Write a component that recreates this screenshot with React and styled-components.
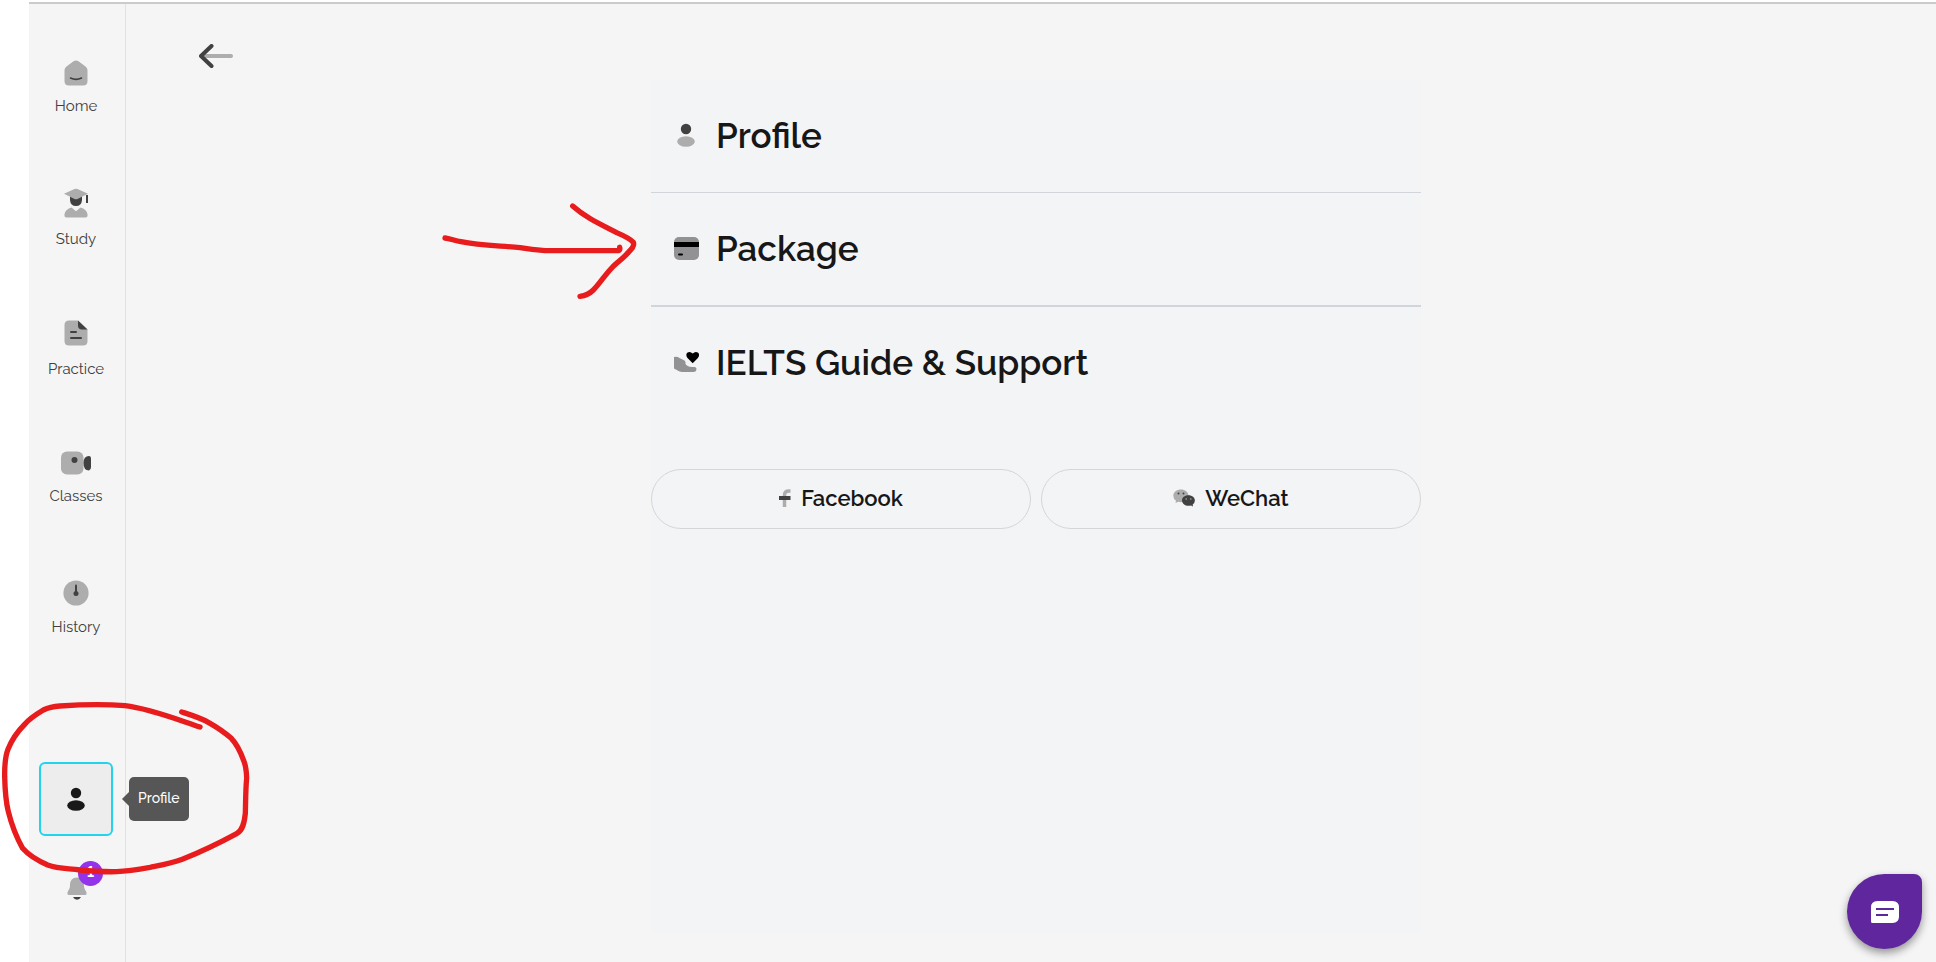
import React from "react";
import styled, { createGlobalStyle } from "styled-components";

const navItems = [
  { label: "Home", icon: <HomeIcon />, gap: 7 },
  { label: "Study", icon: <StudyIcon />, gap: 10 },
  { label: "Practice", icon: <PracticeIcon />, gap: 10 },
  { label: "Classes", icon: <ClassesIcon />, gap: 7 },
  { label: "History", icon: <HistoryIcon />, gap: 8 },
];

const menuItems = [
  { label: "Profile", icon: <PersonIcon head="#414141" body="#adadad" />, line: 1 },
  { label: "Package", icon: <CardIcon />, line: 2 },
  { label: "IELTS Guide & Support", icon: <SupportIcon />, line: 0 },
];

const App = () => {
  return (
    <Page>
      <GlobalStyle />
      <Shell>
        <Sidebar>
          <NavList>
            {navItems.map((item) => (
              <NavLink href="#" key={item.label} $gap={item.gap}>
                <NavIcon>{item.icon}</NavIcon>
                {item.label}
              </NavLink>
            ))}
          </NavList>
          <SidebarBottom>
            <ProfileButton aria-label="Open profile">
              <PersonIcon head="#191919" body="#191919" />
              <Tooltip>Profile</Tooltip>
            </ProfileButton>
            <BellButton aria-label="Notifications">
              <BellIcon />
              <Badge>1</Badge>
            </BellButton>
          </SidebarBottom>
        </Sidebar>
        <Main>
          <BackButton aria-label="Back">
            <BackIcon />
          </BackButton>
          <Panel>
            {menuItems.map((item) => (
              <MenuRow href="#" key={item.label} $line={item.line}>
                <MenuIcon>{item.icon}</MenuIcon>
                {item.label}
              </MenuRow>
            ))}
            <SocialRow>
              <SocialButton>
                <FacebookIcon />
                Facebook
              </SocialButton>
              <SocialButton>
                <WeChatIcon />
                WeChat
              </SocialButton>
            </SocialRow>
          </Panel>
        </Main>
      </Shell>
      <ChatButton aria-label="Chat">
        <ChatIcon />
      </ChatButton>
      <CircleMark viewBox="0 0 780 816">
        <path d="M600 111C530 88 450 56 375 47C310 42 240 44 180 48Q150 50 130 60C100 78 85 90 75 102C50 127 35 150 24 178C13 206 14 230 14 260C15 300 16 330 25 365C35 405 48 440 68 475C90 500 115 513 143 525C175 537 205 535 240 540C280 544 310 546 350 545C385 543 415 538 450 532C485 525 515 520 547 508C610 483 660 458 710 431C728 421 733 400 736 370C737 330 737 295 740 265C739 240 739 230 731 212C722 186 710 162 694 145C675 128 650 111 625 97C600 83 570 74 545 66" />
      </CircleMark>
      <ArrowMark viewBox="0 0 660 750">
        <path d="M45 234C60 236 75 242 93 245C150 257 210 257 270 263Q305 269 345 272L565 272Q571 270 569 262" />
        <path d="M428 138C470 175 510 192 560 218C588 230 600 236 610 247Q615 258 596 276C580 296 560 307 547 322C525 344 510 370 490 390Q474 406 450 409" />
      </ArrowMark>
    </Page>
  );
};
export default App;

function HomeIcon() {
  return (
    <svg width="24" height="26" viewBox="0 0 24 26">
      <path d="M9.5 1.3Q12 -.4 14.5 1.3L21.5 6.4Q23.5 8 23.5 10V21Q23.5 25.5 19 25.5H5Q.5 25.5.5 21V10Q.5 8 2.5 6.4Z" fill="#adadad" />
      <path d="M6.5 18Q12 20.8 17.5 18" fill="none" stroke="#414141" strokeWidth="1.6" strokeLinecap="round" />
    </svg>
  );
}

function StudyIcon() {
  return (
    <svg width="26" height="30" viewBox="0 0 26 30">
      <path d="M7 8V12Q7.500 18 13 18Q18.500 18 19 12V8Z" fill="#414141" />
      <path d="M1 5.800L11.500 .900Q13 .400 14.500 .900L25 5.800L14.500 11Q13 11.600 11.500 11Z" fill="#adadad" />
      <path d="M24 7V15" stroke="#414141" strokeWidth="2" />
      <path d="M8.500 19.500L13 23.200L17.500 19.500Q23.500 21 24.500 26Q25 29.500 22.500 29.500H3.500Q1 29.500 1.500 26Q2.500 21 8.500 19.500Z" fill="#adadad" />
    </svg>
  );
}

function PracticeIcon() {
  return (
    <svg width="24" height="26" viewBox="0 0 24 26">
      <path d="M5 .5H14L23.500 9.500V21Q23.500 25.500 19 25.500H5Q.5 25.500.5 21V5Q.5.500 5 .5Z" fill="#adadad" />
      <path d="M14 .500L23.500 9.500H18Q14 9.500 14 5.500Z" fill="#414141" />
      <path d="M7 12H12M7 18H17" stroke="#414141" strokeWidth="2" strokeLinecap="round" />
    </svg>
  );
}

function ClassesIcon() {
  return (
    <svg width="30" height="24" viewBox="0 0 30 24">
      <rect x="0" y=".5" width="22.500" height="23" rx="6" fill="#adadad" />
      <circle cx="13.500" cy="9" r="3" fill="#414141" />
      <path d="M28 5Q30 5 30 8V16Q30 19 28 19.500Q22.500 19.500 22.500 12Q22.500 5 28 5Z" fill="#414141" />
    </svg>
  );
}

function HistoryIcon() {
  return (
    <svg width="26" height="26" viewBox="0 0 26 26">
      <circle cx="13" cy="13" r="12.600" fill="#adadad" />
      <path d="M13 5.500V13" stroke="#414141" strokeWidth="2" strokeLinecap="round" />
      <circle cx="13" cy="13.500" r="2.500" fill="#414141" />
    </svg>
  );
}

function PersonIcon({ head, body }) {
  return (
    <svg width="18" height="24" viewBox="0 0 18 24">
      <circle cx="9" cy="6" r="5.200" fill={head} />
      <ellipse cx="9" cy="18.500" rx="8.800" ry="5.200" fill={body} />
    </svg>
  );
}

function BellIcon() {
  return (
    <svg width="22" height="24" viewBox="-2 0 22 24">
      <path d="M10 .5C5.500.5 3 3.500 3 8C3 12 1.500 13 .5 15.500Q0 18 2 18H18Q20 18 19.500 15.500C18.500 13 17 12 17 8C17 3.500 14.500.5 10 .5Z" fill="#adadad" />
      <path d="M6 20H14Q12.500 22.800 10 22.800Q7.500 22.800 6 20Z" fill="#414141" />
    </svg>
  );
}

function BackIcon() {
  return (
    <svg width="34" height="24" viewBox="0 0 34 24">
      <path d="M4 12H32" stroke="#adadad" strokeWidth="4" strokeLinecap="round" />
      <path d="M12.500 2L2 12L12.500 22" fill="none" stroke="#414141" strokeWidth="4" strokeLinecap="round" strokeLinejoin="round" />
    </svg>
  );
}

function CardIcon() {
  return (
    <svg width="25" height="23" viewBox="0 0 25 23">
      <rect width="25" height="23" rx="5" fill="#929294" />
      <path d="M0 5H25V10H0Z" />
      <path d="M5 17.500H8" stroke="#000" strokeWidth="2" strokeLinecap="round" />
    </svg>
  );
}

function SupportIcon() {
  return (
    <svg width="25" height="22" viewBox="0 0 25 22">
      <path d="M0 6Q3 5 5.500 7L10.500 9.500Q12 10.500 11.500 13Q13.500 16 18 16H21Q22.800 16.500 22.500 18.500Q22 21 19.500 21H8Q6 21 0 17.500Z" fill="#929294" />
      <path d="M18.700 12.300L13.500 7Q11.300 4 13.200 1.800Q16 -.3 18.700 2.500Q21.400 -.3 24.200 1.800Q26 4 23.900 7Z" />
    </svg>
  );
}

function FacebookIcon() {
  return (
    <svg width="12" height="18" viewBox="0 0 12 18">
      <path d="M5.500 18V6Q5.500 2 10 2H11.500" fill="none" stroke="#adadad" strokeWidth="3.500" />
      <path d="M0 9H11.500" stroke="#414141" strokeWidth="4" />
    </svg>
  );
}

function WeChatIcon() {
  return (
    <svg width="22" height="18" viewBox="0 0 22 18">
      <path d="M8 .5C3.500.5.3 3.200.3 6.800Q.3 9.800 3 11.800L2.500 14L5.200 12.800Q8 13.500 10 12.800C13.500 12.300 15.700 9.500 15.500 6.500C15.300 3 12 .5 8 .5Z" fill="#adadad" />
      <path d="M15.500 6.200C11.500 6.200 9 8.500 9 11.500C9 14.500 12 16.800 15.500 16.800Q16.800 16.800 18 16.400L20 17.500L19.700 15.400Q21.900 13.800 21.900 11.500C21.900 8.500 19.200 6.200 15.500 6.200Z" fill="#414141" />
      <circle cx="5.500" cy="4.500" r="1" fill="#414141" />
      <circle cx="10.500" cy="4.500" r="1" fill="#414141" />
      <circle cx="13.200" cy="10" r=".8" fill="#adadad" />
      <circle cx="17.800" cy="10" r=".8" fill="#adadad" />
    </svg>
  );
}

function ChatIcon() {
  return (
    <svg width="28" height="22" viewBox="0 0 28 22">
      <path d="M6.500 0H21.500Q28 0 28 6.500V15.500Q28 22 21.500 22H1.500Q0 22 0 20.500V6.500Q0 0 6.500 0Z" fill="#fff" />
      <path d="M5 8H23M5 14H17" stroke="#60269e" strokeWidth="2" />
    </svg>
  );
}

const GlobalStyle = createGlobalStyle`
  * {
    box-sizing: border-box;
  }
  body {
    margin: 0;
    background: #fff;
    font-family: Raleway, Lato, sans-serif;
  }
  button {
    padding: 0;
    border: 0;
    background: none;
    font-family: inherit;
    cursor: pointer;
  }
  a {
    text-decoration: none;
  }
  svg {
    display: block;
    flex-shrink: 0;
  }
`;

const Page = styled.div`
  position: relative;
  display: flex;
  min-height: 100vh;
  padding: 2px 0 0 29px;
`;

const Shell = styled.div`
  display: flex;
  flex: 1;
  border-top: 2px solid #cbcbcb;
  background: #f5f5f5;
`;

const Sidebar = styled.aside`
  display: flex;
  flex-direction: column;
  justify-content: space-between;
  width: 97px;
  padding: 53px 2px 57px 0;
  border-right: 1px solid #e2e2e2;
`;

const NavList = styled.nav`
  display: flex;
  flex-direction: column;
  gap: 68px;
`;

const NavLink = styled.a`
  display: flex;
  flex-direction: column;
  align-items: center;
  gap: ${(props) => props.$gap}px;
  height: 62px;
  color: #404040;
  font-size: 15px;
  line-height: 20px;
`;

const NavIcon = styled.span`
  display: flex;
  align-items: center;
  height: 32px;
`;

const SidebarBottom = styled.div`
  display: flex;
  flex-direction: column;
  align-items: center;
  gap: 37px;
`;

const ProfileButton = styled.button`
  position: relative;
  display: flex;
  align-items: center;
  justify-content: center;
  width: 74px;
  height: 74px;
  border: 2px solid #22d3ee;
  border-radius: 6px;
  background: #ededed;
`;

const Tooltip = styled.span`
  position: absolute;
  left: 88px;
  padding: 9px 9px 11px;
  border-radius: 5px;
  background: #565656;
  color: #fff;
  font-size: 14px;
  font-weight: 500;
  line-height: 24px;
  &::before {
    content: "";
    position: absolute;
    top: 15px;
    left: -7px;
    border: 7px solid transparent;
    border-left: 0;
    border-right-color: #565656;
  }
`;

const BellButton = styled.button`
  position: relative;
  display: flex;
  align-items: center;
  justify-content: center;
  width: 32px;
  height: 32px;
`;

const Badge = styled.span`
  position: absolute;
  top: -12px;
  left: 18px;
  width: 25px;
  height: 25px;
  border-radius: 50%;
  background: #9333ea;
  color: #fff;
  font-size: 15px;
  font-weight: 700;
  font-variant-numeric: lining-nums;
  line-height: 23px;
`;

const Main = styled.main`
  display: flex;
  flex-direction: column;
  flex: 1;
  padding: 40px 0 29px 10px;
`;

const BackButton = styled.button`
  align-self: flex-start;
  margin: 0 63px 12px;
`;

const Panel = styled.section`
  display: flex;
  flex-direction: column;
  flex: 1;
  align-self: center;
  width: 100%;
  max-width: 770px;
  background: #f3f4f6;
`;

const MenuRow = styled.a`
  display: flex;
  align-items: center;
  gap: 17px;
  height: ${(props) => 112 + props.$line}px;
  padding: 0 0 2px 22px;
  border-bottom: ${(props) => props.$line}px solid #d1d5db;
  color: #171717;
  font-size: 35px;
  font-weight: 600;
`;

const MenuIcon = styled.span`
  display: flex;
  justify-content: center;
  width: 26px;
`;

const SocialRow = styled.div`
  display: flex;
  gap: 10px;
  margin-top: 50px;
`;

const SocialButton = styled.button`
  display: flex;
  align-items: center;
  justify-content: center;
  flex: 1;
  gap: 10px;
  height: 60px;
  padding-bottom: 2px;
  border: 1px solid #d4d6d8;
  border-radius: 30px;
  color: #171717;
  font-size: 22px;
  font-weight: 600;
`;

const ChatButton = styled.button`
  position: fixed;
  right: 14px;
  bottom: 13px;
  display: flex;
  align-items: center;
  justify-content: center;
  width: 75px;
  height: 75px;
  border-radius: 50% 8px 50% 50%;
  background: #60269e;
  box-shadow: 0 4px 8px rgba(0, 0, 0, 0.4);
`;

const Mark = styled.svg`
  position: absolute;
  fill: none;
  stroke: #e81c1c;
  stroke-width: 16px;
  stroke-linecap: round;
  stroke-linejoin: round;
  pointer-events: none;
`;

const CircleMark = styled(Mark)`
  top: 690px;
  left: 0;
  width: 260px;
  height: 272px;
`;

const ArrowMark = styled(Mark)`
  top: 160px;
  left: 430px;
  width: 220px;
  height: 250px;
`;
